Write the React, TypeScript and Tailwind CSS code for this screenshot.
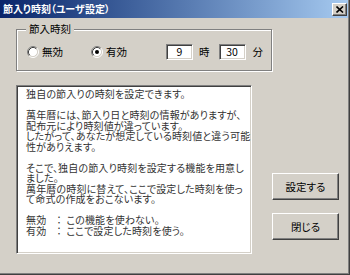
import React from "react"

const font = { fontFamily: '"Noto Sans CJK JP", "Noto Sans", sans-serif' }

function Radio({ checked }: { checked?: boolean }) {
  return (
    <svg width="12" height="12" viewBox="0 0 12 12" className="shrink-0">
      <circle cx="6" cy="6" r="4.5" fill="#fff" />
      <path d="M2.11 9.89 A5.5 5.5 0 0 1 9.89 2.11" fill="none" stroke="#808080" />
      <path d="M9.89 2.11 A5.5 5.5 0 0 1 2.11 9.89" fill="none" stroke="#fff" />
      <path d="M2.82 9.18 A4.5 4.5 0 0 1 9.18 2.82" fill="none" stroke="#404040" />
      <path d="M9.18 2.82 A4.5 4.5 0 0 1 2.82 9.18" fill="none" stroke="#d4d0c8" />
      {checked && <circle cx="6" cy="6" r="2" fill="#000" />}
    </svg>
  )
}

function Field({ value }: { value: string }) {
  return (
    <div className="w-[27px] h-[16px] bg-white border border-t-[#808080] border-l-[#808080] border-r-white border-b-white shadow-[inset_1px_1px_0_#404040,inset_-1px_-1px_0_#d4d0c8] flex items-center justify-center text-[10.5px] text-black">
      {value}
    </div>
  )
}

function Button({ label }: { label: string }) {
  return (
    <button className="w-[67px] h-[27px] bg-[#d4d0c8] border border-t-white border-l-white border-r-[#404040] border-b-[#404040] shadow-[inset_-1px_-1px_0_#808080] text-[10.5px] text-black flex items-center justify-center [font-feature-settings:'palt']">
      {label}
    </button>
  )
}

export default function App() {
  return (
    <div style={font} className="w-[350px] h-[275px] bg-[#d4d0c8] border-r border-b border-[#404040] overflow-hidden">
      <div className="h-full border-r border-b border-[#808080] flex flex-col">
        {/* Title bar */}
        <div className="h-[18px] bg-gradient-to-r from-[#0a246a] to-[#a6caf0] flex items-center justify-between pl-[3px] pr-[1px]">
          <span className="text-[10px] font-bold text-white leading-none [font-feature-settings:'palt']">
            節入り時刻（ユーザ設定）
          </span>
          <div className="w-[15px] h-[13px] bg-[#d4d0c8] border border-t-white border-l-white border-r-[#404040] border-b-[#404040] shadow-[inset_-1px_-1px_0_#808080] flex items-center justify-center">
            <svg width="8" height="7" viewBox="0 0 8 7">
              <path d="M0.5 0.5 L7 6.5 M7 0.5 L0.5 6.5" stroke="#000" strokeWidth="1.6" />
            </svg>
          </div>
        </div>

        <div className="pl-[16px] pt-[11px]">
          {/* Group box */}
          <div className="relative w-[256px] h-[42px] border border-[#808080] shadow-[inset_1px_1px_0_#fff,1px_1px_0_#fff] flex items-center pl-[10px]">
            <span className="absolute -top-[8px] left-[9px] px-[3px] bg-[#d4d0c8] text-[10.5px] leading-[14px] text-black">
              節入時刻
            </span>
            <div className="flex items-center pt-[3px] text-[10.5px] text-black">
              <Radio />
              <span className="ml-[3px]">無効</span>
              <div className="ml-[28px] flex items-center">
                <Radio checked />
                <span className="ml-[3px]">有効</span>
              </div>
              <div className="ml-[39px]">
                <Field value="9" />
              </div>
              <span className="ml-[6px]">時</span>
              <div className="ml-[9px]">
                <Field value="30" />
              </div>
              <span className="ml-[7px]">分</span>
            </div>
          </div>

          <div className="mt-[14px] flex">
            {/* Description */}
            <div className="w-[236px] h-[169px] bg-white border border-t-[#808080] border-l-[#808080] border-r-white border-b-white shadow-[inset_1px_1px_0_#404040,inset_-1px_-1px_0_#d4d0c8] pl-[9px] pt-[3px] text-[10px] leading-[10.5px] tracking-[0.15px] text-[#333] whitespace-pre overflow-hidden [font-feature-settings:'palt']">
              {`独自の節入りの時刻を設定できます。

萬年暦には、節入り日と時刻の情報がありますが、
配布元により時刻値が違っています。
したがって、あなたが想定している時刻値と違う可能
性がありえます。

そこで、独自の節入り時刻を設定する機能を用意し
ました。
萬年暦の時刻に替えて、ここで設定した時刻を使っ
て命式の作成をおこないます。

無効　：  この機能を使わない。
有効　：  ここで設定した時刻を使う。`}
            </div>

            {/* Buttons */}
            <div className="ml-[20px] pt-[88px] flex flex-col gap-[13px]">
              <Button label="設定する" />
              <Button label="閉じる" />
            </div>
          </div>
        </div>
      </div>
    </div>
  )
}
